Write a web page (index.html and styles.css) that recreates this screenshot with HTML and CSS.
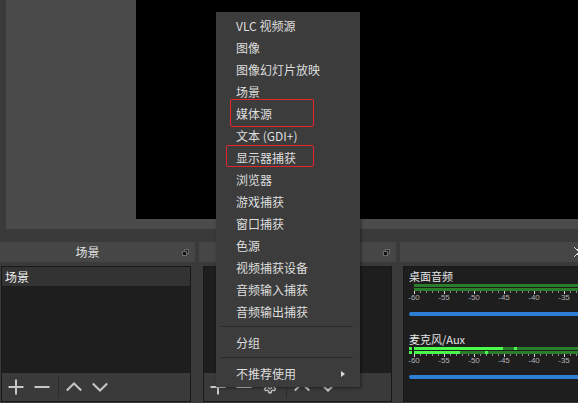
FILE: index.html
```html
<!DOCTYPE html>
<html lang="zh-CN">
<head>
    <meta charset="UTF-8">
    <meta name="viewport" content="width=device-width, initial-scale=1.0">
    <title>OBS - 添加来源</title>
    <link rel="stylesheet" href="styles.css">
</head>
<body>
    <div class="preview">
        <div class="canvas"></div>
    </div>

    <div class="docks">
        <div class="dock dock-scenes">
            <div class="dock-title">
                <span class="title">场景</span>
                <svg class="float-icon" viewBox="0 0 7 7"><rect x="2.5" y="0.5" width="4" height="4" fill="#1c1c1c" stroke="#6a6a6a"/><rect x="0.5" y="2.5" width="4" height="4" fill="#111" stroke="#6a6a6a"/></svg>
            </div>
            <div class="dock-box">
                <ul class="list">
                    <li class="selected">场景</li>
                </ul>
                <div class="toolbar">
                    <span class="tool"><svg viewBox="0 0 16 16"><path d="M8 0.5v15M0.5 8h15"/></svg></span>
                    <span class="tool"><svg viewBox="0 0 16 16"><path d="M0.5 8h15"/></svg></span>
                    <span class="tool-sep"></span>
                    <span class="tool"><svg viewBox="0 0 16 16"><path d="M0.8 11.5L8 4.5l7.2 7"/></svg></span>
                    <span class="tool"><svg viewBox="0 0 16 16"><path d="M0.8 4.5L8 11.5l7.2-7"/></svg></span>
                </div>
            </div>
        </div>

        <div class="dock dock-sources">
            <div class="dock-title">
                <span class="title">来源</span>
                <svg class="float-icon" viewBox="0 0 7 7"><rect x="2.5" y="0.5" width="4" height="4" fill="#1c1c1c" stroke="#6a6a6a"/><rect x="0.5" y="2.5" width="4" height="4" fill="#111" stroke="#6a6a6a"/></svg>
            </div>
            <div class="dock-box">
                <ul class="list"></ul>
                <div class="toolbar">
                    <span class="tool"><svg viewBox="0 0 16 16"><path d="M8 0.5v15M0.5 8h15"/></svg></span>
                    <span class="tool"><svg viewBox="0 0 16 16"><path d="M0.5 8h15"/></svg></span>
                    <span class="tool"><svg class="gear" viewBox="0 0 16 16"><circle cx="8" cy="8" r="2"/><path d="M6.8 1.5h2.4l.4 2 1.6.9 1.9-.7 1.2 2.1-1.5 1.3v1.8l1.5 1.3-1.2 2.1-1.9-.7-1.6.9-.4 2H6.8l-.4-2-1.6-.9-1.9.7-1.2-2.1 1.5-1.3V7.1L1.7 5.8l1.2-2.1 1.9.7 1.6-.9z"/></svg></span>
                    <span class="tool-sep"></span>
                    <span class="tool"><svg viewBox="0 0 16 16"><path d="M0.8 11.5L8 4.5l7.2 7"/></svg></span>
                    <span class="tool"><svg viewBox="0 0 16 16"><path d="M0.8 4.5L8 11.5l7.2-7"/></svg></span>
                </div>
            </div>
        </div>

        <div class="dock dock-mixer">
            <div class="dock-title">
                <span class="title"></span>
                <svg class="config-icon" viewBox="0 0 7 12"><path d="M1 1l5 5-5 5M3 3.5h3M3 8.5h3"/></svg>
            </div>
            <div class="dock-box mixer">
                <div class="channel">
                    <div class="ch-name">桌面音频</div>
                    <div class="meter-row"><span class="clip"></span><span class="bar"></span></div>
                    <div class="meter-row"><span class="clip"></span><span class="bar"></span></div>
                    <div class="ticks"></div>
                    <div class="scale"><span>-60</span><span>-55</span><span>-50</span><span>-45</span><span>-40</span><span>-35</span></div>
                    <div class="fader"></div>
                </div>
                <div class="channel">
                    <div class="ch-name">麦克风/Aux</div>
                    <div class="meter-row"><span class="clip lit"></span><span class="bar"><span class="level" style="width:89px"></span><span class="peak" style="margin-left:11px"></span></span></div>
                    <div class="meter-row"><span class="clip lit"></span><span class="bar"><span class="level" style="width:46px"></span><span class="peak" style="margin-left:25px"></span></span></div>
                    <div class="ticks"></div>
                    <div class="scale"><span>-60</span><span>-55</span><span>-50</span><span>-45</span><span>-40</span><span>-35</span></div>
                    <div class="fader"></div>
                </div>
            </div>
        </div>
    </div>

    <div class="menu">
        <div class="item">VLC 视频源</div>
        <div class="item">图像</div>
        <div class="item">图像幻灯片放映</div>
        <div class="item">场景</div>
        <div class="item">媒体源</div>
        <div class="item">文本 (GDI+)</div>
        <div class="item">显示器捕获</div>
        <div class="item">浏览器</div>
        <div class="item">游戏捕获</div>
        <div class="item">窗口捕获</div>
        <div class="item">色源</div>
        <div class="item">视频捕获设备</div>
        <div class="item">音频输入捕获</div>
        <div class="item">音频输出捕获</div>
        <div class="sep"></div>
        <div class="item">分组</div>
        <div class="sep"></div>
        <div class="item submenu">不推荐使用</div>
        <span class="mark mark-media"></span>
        <span class="mark mark-display"></span>
    </div>
</body>
</html>
```

FILE: styles.css
```css
body {
    margin: 0;
    width: 578px;
    height: 403px;
    overflow: hidden;
    position: relative;
    background: #3a3a3a;
    color: #dedede;
    font-family: "Noto Sans CJK SC", "Noto Sans", sans-serif;
    font-size: 12px;
}

/* preview area */
.preview {
    margin-left: 6px;
    height: 229px;
    box-sizing: border-box;
    padding: 0 0 10px 130px;
    background: #4b4b4b;
}
.canvas {
    height: 100%;
    background: #000;
}

/* docks */
.docks {
    display: flex;
    gap: 4px;
    margin-top: 13px;
    height: 161px;
}
.dock {
    display: flex;
    flex-direction: column;
    flex: none;
}
.dock-scenes { width: 195px; }
.dock-sources { width: 197px; }
.dock-mixer { width: 186px; }

.dock-title {
    height: 20px;
    background: #464646;
    display: flex;
    align-items: center;
    padding-right: 6px;
    color: #e2e2e2;
}
.dock-title .title {
    flex: 1;
    text-align: center;
    line-height: 20px;
}
.float-icon {
    width: 7px;
    height: 7px;
    margin-left: 7px;
}
.config-icon {
    width: 7px;
    height: 12px;
    margin-left: 7px;
    fill: none;
    stroke: #e0e0e0;
    stroke-width: 1;
}

.dock-box {
    flex: 1;
    margin: 4px 4px 1px 4px;
    border: 1px solid #181818;
    background: #1e1e1e;
    display: flex;
    flex-direction: column;
    min-height: 0;
}
.dock-scenes .dock-box { margin-left: 1px; }
.dock-mixer .dock-box { margin: 4px 0 1px 3px; }

.list {
    flex: 1;
    margin: 0;
    padding: 0;
    list-style: none;
}
.list li {
    height: 19px;
    line-height: 19px;
    padding-left: 3px;
    color: #f0f0f0;
}
.list li.selected {
    background: #333333;
}

.toolbar {
    height: 28px;
    flex: none;
    background: #3a3a3a;
    display: flex;
    align-items: center;
    padding-left: 1px;
}
.tool {
    width: 26px;
    height: 28px;
    display: flex;
    align-items: center;
    justify-content: center;
}
.tool svg {
    width: 16px;
    height: 16px;
    fill: none;
    stroke: #c6c6c6;
    stroke-width: 2;
}
.tool svg.gear {
    width: 14px;
    height: 14px;
    stroke-width: 1.6;
}
.tool-sep {
    width: 1px;
    height: 22px;
    background: #2c2c2c;
    margin: 0 2px 0 3px;
}

/* audio mixer */
.mixer {
    padding: 2px 0 0 5px;
}
.channel + .channel {
    margin-top: 16px;
}
.ch-name {
    height: 14px;
    line-height: 14px;
    font-size: 11px;
    color: #e4e4e4;
    margin-bottom: 1px;
}
.meter-row {
    display: flex;
    height: 3px;
    gap: 2px;
}
.meter-row + .meter-row {
    margin-top: 1px;
}
.clip {
    width: 3px;
    flex: none;
}
.clip.lit {
    background: #4cfc4c;
}
.bar {
    flex: 1;
    display: flex;
    background: #2a7d2a;
}
.bar .level {
    background: #4cfc4c;
}
.bar .peak {
    width: 3px;
    background: #4cfc4c;
}
.ticks {
    margin-left: 5px;
    height: 3px;
    background:
        repeating-linear-gradient(to right, #d8d8d8 0 1px, transparent 1px 30px),
        repeating-linear-gradient(to right, #8c8c8c 0 1px, transparent 1px 6px) top left / 100% 2px no-repeat;
}
.scale {
    display: flex;
    margin-left: -10px;
    height: 7px;
    font-family: "Liberation Sans", sans-serif;
    font-size: 8px;
    line-height: 8px;
    color: #b2b2b2;
    white-space: nowrap;
}
.scale span {
    flex: none;
    width: 30px;
    text-align: center;
}
.fader {
    margin-top: 11px;
    height: 4px;
    background: #2e7ed4;
    border-radius: 2px 0 0 2px;
}

/* context menu */
.menu {
    position: absolute;
    left: 216px;
    top: 12px;
    width: 144px;
    padding: 3px 0 2px;
    background: #3c3c3c;
    box-shadow: 1px 1px 3px rgba(0, 0, 0, 0.45);
}
.item {
    position: relative;
    height: 22px;
    line-height: 22px;
    padding-left: 20px;
    color: #dedede;
    white-space: nowrap;
}
.submenu::after {
    content: "";
    position: absolute;
    right: 15px;
    top: 8px;
    border-left: 4px solid #dcdcdc;
    border-top: 3.5px solid transparent;
    border-bottom: 3.5px solid transparent;
}
.sep {
    height: 1px;
    margin: 3px 7px 5px 5px;
    background: #2a2a2a;
}
.mark {
    position: absolute;
    box-sizing: border-box;
    border: 1px solid #e3262a;
    border-radius: 2px;
}
.mark-media {
    left: 14px;
    top: 87px;
    width: 84px;
    height: 28px;
}
.mark-display {
    left: 10px;
    top: 133px;
    width: 88px;
    height: 22px;
}
```
